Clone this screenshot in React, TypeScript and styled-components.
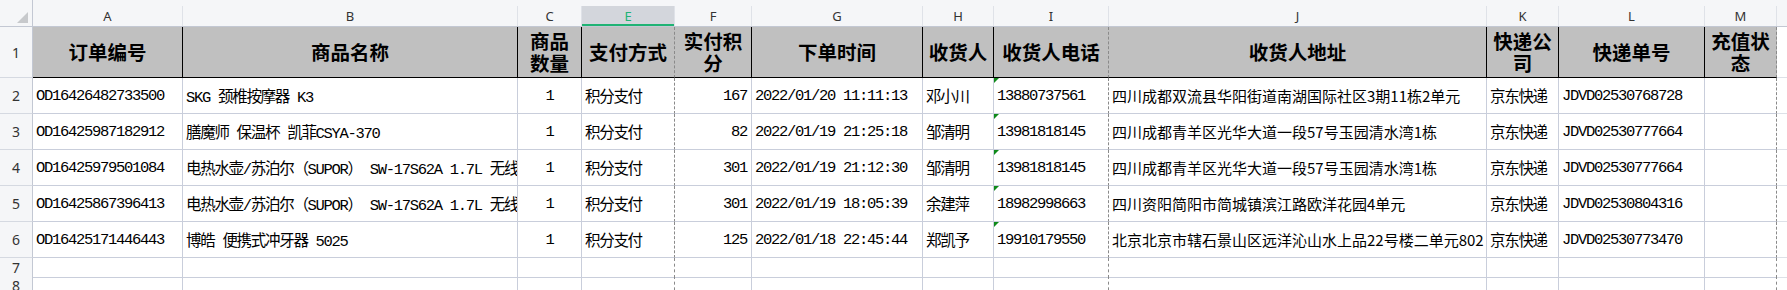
import styled, { createGlobalStyle } from "styled-components";

const GlobalStyle = createGlobalStyle`
  html, body {
    margin: 0;
    padding: 0;
    background: #ffffff;
  }
  body {
    font-family: "Noto Sans", "Noto Sans CJK SC", sans-serif;
  }
`;

const widths = [150, 335, 64, 93, 77, 171, 71, 115, 378, 72, 146, 72];
const template = `33px ${widths.map((w) => `${w}px`).join(" ")} 1fr`;

// columns whose right edge is a page-break line
const dashed = [3, 7, 11];

const letters = ["A", "B", "C", "E", "F", "G", "H", "I", "J", "K", "L", "M"];

const headers: string[][] = [
  ["订单编号"],
  ["商品名称"],
  ["商品", "数量"],
  ["支付方式"],
  ["实付积", "分"],
  ["下单时间"],
  ["收货人"],
  ["收货人电话"],
  ["收货人地址"],
  ["快递公", "司"],
  ["快递单号"],
  ["充值状", "态"],
];

type Align = "left" | "center" | "right";
const aligns: Align[] = ["left", "left", "center", "left", "right", "left", "left", "left", "left", "left", "left", "left"];

const kettle = "电热水壶/苏泊尔（SUPOR） SW-17S62A 1.7L 无线电水壶";

const orders: string[][] = [
  ["OD16426482733500", "SKG 颈椎按摩器 K3", "1", "积分支付", "167", "2022/01/20 11:11:13", "邓小川", "13880737561", "四川成都双流县华阳街道南湖国际社区3期11栋2单元", "京东快递", "JDVD02530768728", ""],
  ["OD16425987182912", "膳魔师 保温杯 凯菲CSYA-370", "1", "积分支付", "82", "2022/01/19 21:25:18", "邹清明", "13981818145", "四川成都青羊区光华大道一段57号玉园清水湾1栋", "京东快递", "JDVD02530777664", ""],
  ["OD16425979501084", kettle, "1", "积分支付", "301", "2022/01/19 21:12:30", "邹清明", "13981818145", "四川成都青羊区光华大道一段57号玉园清水湾1栋", "京东快递", "JDVD02530777664", ""],
  ["OD16425867396413", kettle, "1", "积分支付", "301", "2022/01/19 18:05:39", "余建萍", "18982998663", "四川资阳简阳市简城镇滨江路欧洋花园4单元", "京东快递", "JDVD02530804316", ""],
  ["OD16425171446443", "博皓 便携式冲牙器 5025", "1", "积分支付", "125", "2022/01/18 22:45:44", "郑凯予", "19910179550", "北京北京市辖石景山区远洋沁山水上品22号楼二单元802", "京东快递", "JDVD02530773470", ""],
];

const Sheet = styled.div`
  width: 1787px;
  height: 290px;
  overflow: hidden;
  background: #ffffff;
`;

const ColHeaderRow = styled.div`
  display: grid;
  grid-template-columns: ${template};
  height: 27px;
  padding-top: 6px;
  box-sizing: border-box;
  background: #f5f6f8;
  border-bottom: 1px solid #c3c8d3;
`;

const Corner = styled.div`
  position: relative;
  border-right: 1px solid #c3c8d3;
  margin-top: -6px;

  &::after {
    content: "";
    position: absolute;
    right: 4px;
    bottom: 3px;
    width: 0;
    height: 0;
    border-style: solid;
    border-width: 0 0 11px 11px;
    border-color: transparent transparent #c7c9cc transparent;
  }
`;

const ColLetter = styled.div<{ $active?: boolean }>`
  display: flex;
  align-items: center;
  justify-content: center;
  font-family: "Noto Sans", "Liberation Sans", sans-serif;
  font-size: 13px;
  color: ${({ $active }) => ($active ? "#21b376" : "#333333")};
  background: ${({ $active }) => ($active ? "#d3d6dc" : "transparent")};
  border-right: 1px solid #dfe2e8;
  box-shadow: ${({ $active }) => ($active ? "inset 0 -2px 0 #1fb374" : "none")};
`;

const Row = styled.div<{ $h: number }>`
  display: grid;
  grid-template-columns: ${template};
  height: ${({ $h }) => $h}px;
`;

const RowNum = styled.div`
  display: flex;
  align-items: center;
  justify-content: center;
  box-sizing: border-box;
  background: #f5f6f8;
  border-right: 1px solid #c3c8d3;
  border-bottom: 1px solid #d5d9e1;
  font-family: "Noto Sans", "Liberation Sans", sans-serif;
  font-size: 14px;
  color: #333333;
`;

const HeadCell = styled.div<{ $dash?: boolean }>`
  display: flex;
  flex-direction: column;
  align-items: center;
  justify-content: center;
  box-sizing: border-box;
  background: #c0c0c0;
  border-bottom: 1px solid #000000;
  border-right: ${({ $dash }) => ($dash ? "1px dashed #8a8a8a" : "1px solid #000000")};
  font-family: "Noto Sans CJK SC", sans-serif;
  font-weight: 700;
  font-size: 19.5px;
  line-height: 22px;
  color: #000000;
  white-space: nowrap;
  overflow: hidden;
`;

const Cell = styled.div<{ $align?: Align; $dash?: boolean; $sans?: boolean; $flag?: boolean }>`
  position: relative;
  display: flex;
  align-items: center;
  justify-content: ${({ $align }) =>
    $align === "center" ? "center" : $align === "right" ? "flex-end" : "flex-start"};
  padding: 0 ${({ $align }) => ($align === "right" ? "4px" : "3px")};
  box-sizing: border-box;
  min-width: 0;
  overflow: hidden;
  white-space: nowrap;
  border-bottom: 1px solid #c9cedb;
  border-right: ${({ $dash }) => ($dash ? "1px dashed #8a8a8a" : "1px solid #c9cedb")};
  font-family: ${({ $sans }) =>
    $sans ? `"Noto Sans CJK SC", sans-serif` : `"Liberation Mono", "Noto Sans CJK SC", monospace`};
  font-size: ${({ $sans }) => ($sans ? "15px" : "15.5px")};
  letter-spacing: ${({ $sans }) => ($sans ? "0" : "-1.3px")};
  color: #000000;

  &::before {
    content: "";
    display: ${({ $flag }) => ($flag ? "block" : "none")};
    position: absolute;
    left: 0;
    top: 0;
    border-style: solid;
    border-width: 5px 5px 0 0;
    border-color: #0f8a1a transparent transparent transparent;
  }
`;

const Filler = styled.div`
  border-bottom: 1px solid #dde1e8;
`;

export default function App() {
  return (
    <Sheet>
      <GlobalStyle />
      <ColHeaderRow>
        <Corner />
        {letters.map((l) => (
          <ColLetter key={l} $active={l === "E"}>
            {l}
          </ColLetter>
        ))}
        <div />
      </ColHeaderRow>

      <Row $h={51}>
        <RowNum>1</RowNum>
        {headers.map((lines, i) => (
          <HeadCell key={i} $dash={dashed.includes(i)}>
            {lines.map((t) => (
              <span key={t}>{t}</span>
            ))}
          </HeadCell>
        ))}
        <Filler />
      </Row>

      {orders.map((order, r) => (
        <Row key={r} $h={36}>
          <RowNum>{r + 2}</RowNum>
          {order.map((v, i) => (
            <Cell
              key={i}
              $align={aligns[i]}
              $dash={dashed.includes(i)}
              $sans={i === 8}
              $flag={i === 7}
            >
              {v}
            </Cell>
          ))}
          <Filler />
        </Row>
      ))}

      {[7, 8].map((n) => (
        <Row key={n} $h={18}>
          <RowNum>{n}</RowNum>
          {widths.map((_, i) => (
            <Cell key={i} $dash={dashed.includes(i)} />
          ))}
          <Filler />
        </Row>
      ))}
    </Sheet>
  );
}
